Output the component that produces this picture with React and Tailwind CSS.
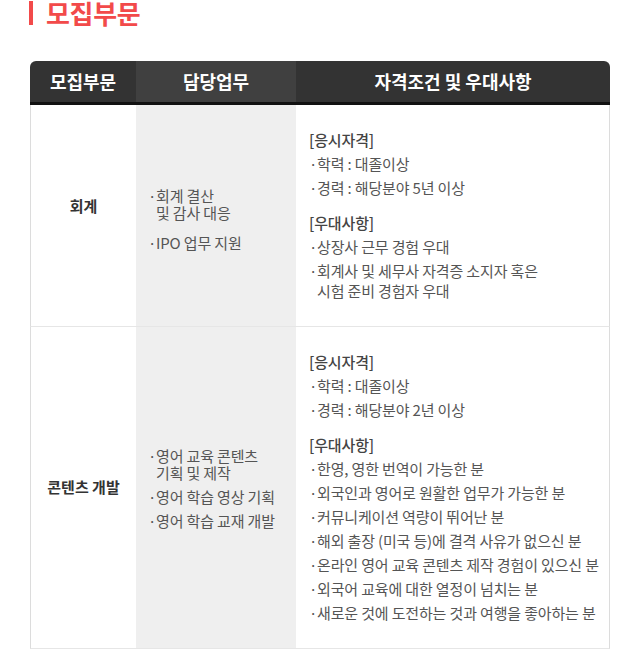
const FONT = "font-['Noto_Sans_CJK_KR','Noto_Sans',sans-serif]";

const rows = [
  {
    part: '회계',
    partPad: 'pb-[18px]',
    dutyPad: 'pt-[6px]',
    duties: [['회계 결산', '및 감사 대응'], ['IPO 업무 지원']],
    dutyGap: 'mt-[13px]',
    quals: ['학력 : 대졸이상', '경력 : 해당분야 5년 이상'],
    prefs: [['상장사 근무 경험 우대'], ['회계사 및 세무사 자격증 소지자 혹은', '시험 준비 경험자 우대']],
  },
  {
    part: '콘텐츠 개발',
    partPad: '',
    dutyPad: '',
    duties: [['영어 교육 콘텐츠', '기획 및 제작'], ['영어 학습 영상 기획'], ['영어 학습 교재 개발']],
    dutyGap: 'mt-[7px]',
    quals: ['학력 : 대졸이상', '경력 : 해당분야 2년 이상'],
    prefs: [
      ['한영, 영한 번역이 가능한 분'],
      ['외국인과 영어로 원활한 업무가 가능한 분'],
      ['커뮤니케이션 역량이 뛰어난 분'],
      ['해외 출장 (미국 등)에 결격 사유가 없으신 분'],
      ['온라인 영어 교육 콘텐츠 제작 경험이 있으신 분'],
      ['외국어 교육에 대한 열정이 넘치는 분'],
      ['새로운 것에 도전하는 것과 여행을 좋아하는 분'],
    ],
  },
];

function Bullet({ lines, className = '' }) {
  return (
    <li className={`flex ${className}`}>
      <span className="w-[8px] shrink-0">·</span>
      <span>
        {lines.map((l, i) => (
          <span key={i} className="block">{l}</span>
        ))}
      </span>
    </li>
  );
}

export default function App() {
  return (
    <div className={`${FONT} bg-white w-[640px] h-[652px] overflow-hidden`}>
      <div className="flex items-center h-[26px] pl-[29px]">
        <span className="w-[4px] h-[24px] bg-[#f24a4a]" />
        <h2 className="ml-[13px] text-[26px] leading-[26px] font-bold text-[#f24a4a] tracking-[-0.3px]">모집부문</h2>
      </div>

      <div className="mx-[30px] mt-[35px] w-[580px]">
        <div className="flex h-[44px] rounded-t-[6px] overflow-hidden border-b-[3px] border-[#111] text-white text-[18px] font-bold">
          <div className="w-[106px] bg-[#333] flex items-center justify-center">모집부문</div>
          <div className="w-[160px] bg-[#404040] flex items-center justify-center">담당업무</div>
          <div className="flex-1 bg-[#333] flex items-center justify-center">자격조건 및 우대사항</div>
        </div>

        {rows.map((r) => (
          <div key={r.part} className="flex border-x border-b border-[#e6e6e6] border-l-[#dcdcdc] border-r-[#dcdcdc]">
            <div className={`w-[105px] flex items-center justify-center text-[15px] font-bold text-[#333] ${r.partPad}`}>
              {r.part}
            </div>
            <div className={`w-[160px] bg-[#efefef] flex items-center pl-[12px] text-[15px] leading-[17px] text-[#555] tracking-[-0.15px] ${r.dutyPad}`}>
              <ul>
                {r.duties.map((d, i) => (
                  <Bullet key={i} lines={d} className={i ? r.dutyGap : ''} />
                ))}
              </ul>
            </div>
            <div className="flex-1 pl-[13px] pt-[25px] pb-[25px] text-[15px] leading-[20px] text-[#555] tracking-[-0.15px]">
              <div className="font-medium text-[#444]">[응시자격]</div>
              <ul className="mt-[4px]">
                {r.quals.map((q, i) => (
                  <Bullet key={i} lines={[q]} className={i ? 'mt-[4px]' : ''} />
                ))}
              </ul>
              <div className="mt-[15px] font-medium text-[#444]">[우대사항]</div>
              <ul className="mt-[4px]">
                {r.prefs.map((p, i) => (
                  <Bullet key={i} lines={p} className={i ? 'mt-[4px]' : ''} />
                ))}
              </ul>
            </div>
          </div>
        ))}
      </div>
    </div>
  );
}
